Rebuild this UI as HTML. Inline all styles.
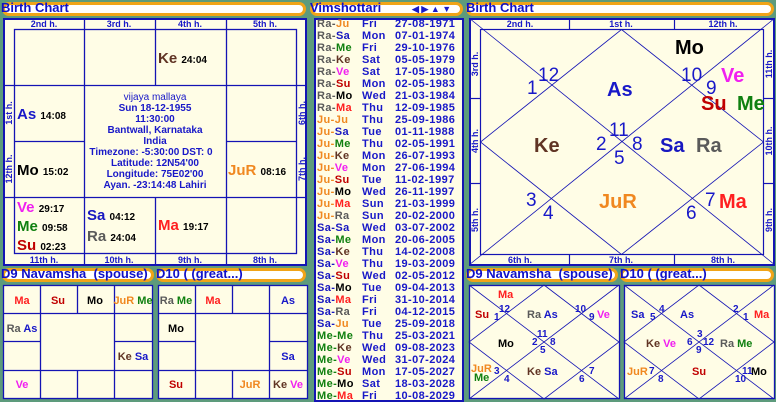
<!DOCTYPE html>
<html><head><meta charset="utf-8"><style>
*{margin:0;padding:0;box-sizing:border-box}
body{width:776px;height:400px;background:#5d9b7c;position:relative;overflow:hidden;font-family:"Liberation Sans",Arial,sans-serif;font-weight:bold}
.hd{position:absolute;height:14px;background:#fff;border:3px solid #f0a418;border-radius:8px}
.tt{position:absolute;color:#1010c8;font-size:13px;font-weight:bold;line-height:14px;white-space:nowrap}
.box{position:absolute;background:#fffde6;border:2px solid #1414b4}
.a{position:absolute;white-space:nowrap;line-height:1}
.b{color:#1818c8}.ra{color:#5a5a5a}.ju{color:#f08820}.sa{color:#1818c0}.me{color:#108010}.ke{color:#603424}.ve{color:#f020f0}.su{color:#c00000}.mo{color:#000}.ma{color:#ff2020}
.vr{position:absolute;left:317px;font-size:11px;line-height:12px;white-space:nowrap;letter-spacing:0.4px}
</style></head><body>

<!-- headers -->
<div class="hd" style="left:2px;top:2px;width:304px"></div><div class="tt" style="left:1px;top:1px">Birth Chart</div>
<div class="hd" style="left:310px;top:2px;width:153px"></div><div class="tt" style="left:310px;top:1px">Vimshottari</div>
<div class="a b" style="left:412px;top:5px;font-size:9px">◀ ▶ ▲ ▼</div>
<div class="hd" style="left:466px;top:2px;width:308px"></div><div class="tt" style="left:466px;top:1px">Birth Chart</div>
<div class="hd" style="left:2px;top:268px;width:152px"></div><div class="tt" style="left:1px;top:267px">D9 Navamsha &nbsp;(spouse)</div>
<div class="hd" style="left:156px;top:268px;width:150px"></div><div class="tt" style="left:156px;top:267px">D10 ( (great...)</div>
<div class="hd" style="left:466px;top:268px;width:152px"></div><div class="tt" style="left:466px;top:267px">D9 Navamsha &nbsp;(spouse)</div>
<div class="hd" style="left:620px;top:268px;width:154px"></div><div class="tt" style="left:620px;top:267px">D10 ( (great...)</div>

<!-- South birth chart -->
<div class="box" style="left:3px;top:18px;width:304px;height:248px"></div>
<svg style="position:absolute;left:0;top:0" width="310" height="270">
<g stroke="#1414b4" stroke-width="1.3" fill="none">
<rect x="14.5" y="29.5" width="282" height="224"/>
<line x1="84.5" y1="18" x2="84.5" y2="85"/><line x1="155.5" y1="18" x2="155.5" y2="85"/><line x1="226.5" y1="18" x2="226.5" y2="85"/>
<line x1="84.5" y1="197" x2="84.5" y2="265"/><line x1="155.5" y1="197" x2="155.5" y2="265"/><line x1="226.5" y1="197" x2="226.5" y2="265"/>
<line x1="3" y1="85.5" x2="306" y2="85.5"/><line x1="3" y1="197.5" x2="306" y2="197.5"/>
<line x1="14" y1="141.5" x2="84" y2="141.5"/><line x1="226" y1="141.5" x2="297" y2="141.5"/>
<line x1="84.5" y1="85" x2="84.5" y2="197"/><line x1="226.5" y1="85" x2="226.5" y2="197"/>
</g>
<g fill="#1818c8" font-size="9" font-weight="bold" font-family="Liberation Sans,Arial" text-anchor="middle">
<text x="44" y="27">2nd h.</text><text x="119" y="27">3rd h.</text><text x="190" y="27">4th h.</text><text x="265" y="27">5th h.</text>
<text x="44" y="263">11th h.</text><text x="119" y="263">10th h.</text><text x="190" y="263">9th h.</text><text x="265" y="263">8th h.</text>
<text transform="translate(12,113) rotate(-90)">1st h.</text><text transform="translate(12,169) rotate(-90)">12th h.</text>
<text transform="translate(305,113) rotate(-90)">6th h.</text><text transform="translate(305,169) rotate(-90)">7th h.</text>
</g></svg>
<div class="a" style="left:158px;top:51px;font-size:15px"><span class="ke">Ke</span> <span style="font-size:10px">24:04</span></div>
<div class="a" style="left:17px;top:107px;font-size:15px"><span class="b">As</span> <span style="font-size:10px">14:08</span></div>
<div class="a" style="left:17px;top:163px;font-size:15px"><span class="mo">Mo</span> <span style="font-size:10px">15:02</span></div>
<div class="a" style="left:228px;top:163px;font-size:15px"><span class="ju">JuR</span> <span style="font-size:10px">08:16</span></div>
<div class="a" style="left:17px;top:200px;font-size:15px"><span class="ve">Ve</span> <span style="font-size:10px">29:17</span></div>
<div class="a" style="left:17px;top:219px;font-size:15px"><span class="me">Me</span> <span style="font-size:10px">09:58</span></div>
<div class="a" style="left:17px;top:238px;font-size:15px"><span class="su">Su</span> <span style="font-size:10px">02:23</span></div>
<div class="a" style="left:87px;top:208px;font-size:15px"><span class="sa">Sa</span> <span style="font-size:10px">04:12</span></div>
<div class="a" style="left:87px;top:229px;font-size:15px"><span class="ra">Ra</span> <span style="font-size:10px">24:04</span></div>
<div class="a" style="left:158px;top:218px;font-size:15px"><span class="ma">Ma</span> <span style="font-size:10px">19:17</span></div>
<div class="a b" style="left:80px;width:150px;top:92px;text-align:center;font-size:10px;line-height:11px;white-space:normal">
<span style="font-weight:normal">vijaya mallaya</span><br>Sun 18-12-1955<br>11:30:00<br>Bantwall, Karnataka<br>India<br><span style="margin-left:-8px;white-space:nowrap">Timezone: -5:30:00 DST: 0</span><br>Latitude: 12N54'00<br>Longitude: 75E02'00<br>Ayan. -23:14:48 Lahiri</div>

<!-- Vimshottari -->
<div class="box" style="left:314px;top:18px;width:150px;height:384px"></div>
<div style="position:absolute;left:0;top:18px">
<div class="vr" style="top:0px"><span class="ra">Ra-</span><span class="ju">Ju</span><span class="b" style="position:absolute;left:45px">Fri</span><span class="b" style="position:absolute;left:78px">27-08-1971</span></div>
<div class="vr" style="top:12px"><span class="ra">Ra-</span><span class="sa">Sa</span><span class="b" style="position:absolute;left:45px">Mon</span><span class="b" style="position:absolute;left:78px">07-01-1974</span></div>
<div class="vr" style="top:24px"><span class="ra">Ra-</span><span class="me">Me</span><span class="b" style="position:absolute;left:45px">Fri</span><span class="b" style="position:absolute;left:78px">29-10-1976</span></div>
<div class="vr" style="top:36px"><span class="ra">Ra-</span><span class="ke">Ke</span><span class="b" style="position:absolute;left:45px">Sat</span><span class="b" style="position:absolute;left:78px">05-05-1979</span></div>
<div class="vr" style="top:48px"><span class="ra">Ra-</span><span class="ve">Ve</span><span class="b" style="position:absolute;left:45px">Sat</span><span class="b" style="position:absolute;left:78px">17-05-1980</span></div>
<div class="vr" style="top:60px"><span class="ra">Ra-</span><span class="su">Su</span><span class="b" style="position:absolute;left:45px">Mon</span><span class="b" style="position:absolute;left:78px">02-05-1983</span></div>
<div class="vr" style="top:72px"><span class="ra">Ra-</span><span class="mo">Mo</span><span class="b" style="position:absolute;left:45px">Wed</span><span class="b" style="position:absolute;left:78px">21-03-1984</span></div>
<div class="vr" style="top:84px"><span class="ra">Ra-</span><span class="ma">Ma</span><span class="b" style="position:absolute;left:45px">Thu</span><span class="b" style="position:absolute;left:78px">12-09-1985</span></div>
<div class="vr" style="top:96px"><span class="ju">Ju-</span><span class="ju">Ju</span><span class="b" style="position:absolute;left:45px">Thu</span><span class="b" style="position:absolute;left:78px">25-09-1986</span></div>
<div class="vr" style="top:108px"><span class="ju">Ju-</span><span class="sa">Sa</span><span class="b" style="position:absolute;left:45px">Tue</span><span class="b" style="position:absolute;left:78px">01-11-1988</span></div>
<div class="vr" style="top:120px"><span class="ju">Ju-</span><span class="me">Me</span><span class="b" style="position:absolute;left:45px">Thu</span><span class="b" style="position:absolute;left:78px">02-05-1991</span></div>
<div class="vr" style="top:132px"><span class="ju">Ju-</span><span class="ke">Ke</span><span class="b" style="position:absolute;left:45px">Mon</span><span class="b" style="position:absolute;left:78px">26-07-1993</span></div>
<div class="vr" style="top:144px"><span class="ju">Ju-</span><span class="ve">Ve</span><span class="b" style="position:absolute;left:45px">Mon</span><span class="b" style="position:absolute;left:78px">27-06-1994</span></div>
<div class="vr" style="top:156px"><span class="ju">Ju-</span><span class="su">Su</span><span class="b" style="position:absolute;left:45px">Tue</span><span class="b" style="position:absolute;left:78px">11-02-1997</span></div>
<div class="vr" style="top:168px"><span class="ju">Ju-</span><span class="mo">Mo</span><span class="b" style="position:absolute;left:45px">Wed</span><span class="b" style="position:absolute;left:78px">26-11-1997</span></div>
<div class="vr" style="top:180px"><span class="ju">Ju-</span><span class="ma">Ma</span><span class="b" style="position:absolute;left:45px">Sun</span><span class="b" style="position:absolute;left:78px">21-03-1999</span></div>
<div class="vr" style="top:192px"><span class="ju">Ju-</span><span class="ra">Ra</span><span class="b" style="position:absolute;left:45px">Sun</span><span class="b" style="position:absolute;left:78px">20-02-2000</span></div>
<div class="vr" style="top:204px"><span class="sa">Sa-</span><span class="sa">Sa</span><span class="b" style="position:absolute;left:45px">Wed</span><span class="b" style="position:absolute;left:78px">03-07-2002</span></div>
<div class="vr" style="top:216px"><span class="sa">Sa-</span><span class="me">Me</span><span class="b" style="position:absolute;left:45px">Mon</span><span class="b" style="position:absolute;left:78px">20-06-2005</span></div>
<div class="vr" style="top:228px"><span class="sa">Sa-</span><span class="ke">Ke</span><span class="b" style="position:absolute;left:45px">Thu</span><span class="b" style="position:absolute;left:78px">14-02-2008</span></div>
<div class="vr" style="top:240px"><span class="sa">Sa-</span><span class="ve">Ve</span><span class="b" style="position:absolute;left:45px">Thu</span><span class="b" style="position:absolute;left:78px">19-03-2009</span></div>
<div class="vr" style="top:252px"><span class="sa">Sa-</span><span class="su">Su</span><span class="b" style="position:absolute;left:45px">Wed</span><span class="b" style="position:absolute;left:78px">02-05-2012</span></div>
<div class="vr" style="top:264px"><span class="sa">Sa-</span><span class="mo">Mo</span><span class="b" style="position:absolute;left:45px">Tue</span><span class="b" style="position:absolute;left:78px">09-04-2013</span></div>
<div class="vr" style="top:276px"><span class="sa">Sa-</span><span class="ma">Ma</span><span class="b" style="position:absolute;left:45px">Fri</span><span class="b" style="position:absolute;left:78px">31-10-2014</span></div>
<div class="vr" style="top:288px"><span class="sa">Sa-</span><span class="ra">Ra</span><span class="b" style="position:absolute;left:45px">Fri</span><span class="b" style="position:absolute;left:78px">04-12-2015</span></div>
<div class="vr" style="top:300px"><span class="sa">Sa-</span><span class="ju">Ju</span><span class="b" style="position:absolute;left:45px">Tue</span><span class="b" style="position:absolute;left:78px">25-09-2018</span></div>
<div class="vr" style="top:312px"><span class="me">Me-</span><span class="me">Me</span><span class="b" style="position:absolute;left:45px">Thu</span><span class="b" style="position:absolute;left:78px">25-03-2021</span></div>
<div class="vr" style="top:324px"><span class="me">Me-</span><span class="ke">Ke</span><span class="b" style="position:absolute;left:45px">Wed</span><span class="b" style="position:absolute;left:78px">09-08-2023</span></div>
<div class="vr" style="top:336px"><span class="me">Me-</span><span class="ve">Ve</span><span class="b" style="position:absolute;left:45px">Wed</span><span class="b" style="position:absolute;left:78px">31-07-2024</span></div>
<div class="vr" style="top:348px"><span class="me">Me-</span><span class="su">Su</span><span class="b" style="position:absolute;left:45px">Mon</span><span class="b" style="position:absolute;left:78px">17-05-2027</span></div>
<div class="vr" style="top:360px"><span class="me">Me-</span><span class="mo">Mo</span><span class="b" style="position:absolute;left:45px">Sat</span><span class="b" style="position:absolute;left:78px">18-03-2028</span></div>
<div class="vr" style="top:372px"><span class="me">Me-</span><span class="ma">Ma</span><span class="b" style="position:absolute;left:45px">Fri</span><span class="b" style="position:absolute;left:78px">10-08-2029</span></div>
</div>

<!-- North birth chart -->
<div class="box" style="left:469px;top:18px;width:306px;height:248px"></div>
<svg style="position:absolute;left:0;top:0" width="776" height="400">
<g stroke="#1414b4" stroke-width="1.2" fill="none">
<rect x="480.5" y="29.5" width="283" height="225"/>
<line x1="569.5" y1="18" x2="569.5" y2="29"/><line x1="674.5" y1="18" x2="674.5" y2="29"/>
<line x1="569.5" y1="254" x2="569.5" y2="265"/><line x1="674.5" y1="254" x2="674.5" y2="265"/>
<line x1="469" y1="98.5" x2="480" y2="98.5"/><line x1="469" y1="183.5" x2="480" y2="183.5"/>
<line x1="763" y1="98.5" x2="775" y2="98.5"/><line x1="763" y1="183.5" x2="775" y2="183.5"/>
<line x1="469" y1="18" x2="775" y2="265" stroke-width="0.8"/><line x1="775" y1="18" x2="469" y2="265" stroke-width="0.8"/>
<polygon points="621.5,29.5 763.5,142 621.5,254.5 480.5,142" stroke-width="0.8"/>
</g>
<g fill="#1818c8" font-size="9" font-weight="bold" font-family="Liberation Sans,Arial" text-anchor="middle">
<text x="520" y="27">2nd h.</text><text x="621" y="27">1st h.</text><text x="723" y="27">12th h.</text>
<text x="520" y="263">6th h.</text><text x="621" y="263">7th h.</text><text x="723" y="263">8th h.</text>
<text transform="translate(478,64) rotate(-90)">3rd h.</text><text transform="translate(478,141) rotate(-90)">4th h.</text><text transform="translate(478,220) rotate(-90)">5th h.</text>
<text transform="translate(772,64) rotate(-90)">11th h.</text><text transform="translate(772,141) rotate(-90)">10th h.</text><text transform="translate(772,220) rotate(-90)">9th h.</text>
</g>
<g fill="#1818c8" font-size="19" font-family="Liberation Sans,Arial" font-weight="normal">
<text x="538" y="81">12</text><text x="527" y="94">1</text><text x="681" y="81">10</text><text x="706" y="94">9</text>
<text x="609" y="136">11</text><text x="596" y="150">2</text><text x="632" y="150">8</text><text x="614" y="164">5</text>
<text x="526" y="206">3</text><text x="543" y="219">4</text><text x="686" y="219">6</text><text x="705" y="206">7</text>
</g>
<g font-size="20" font-weight="bold" font-family="Liberation Sans,Arial">
<text x="675" y="54" fill="#000">Mo</text><text x="721" y="82" fill="#f020f0">Ve</text>
<text x="701" y="110" fill="#c00000">Su</text><text x="737" y="110" fill="#108010">Me</text>
<text x="607" y="96" fill="#1818c8">As</text><text x="534" y="152" fill="#603424">Ke</text>
<text x="660" y="152" fill="#1818c0">Sa</text><text x="696" y="152" fill="#5a5a5a">Ra</text>
<text x="599" y="208" fill="#f08820">JuR</text><text x="719" y="208" fill="#ff2020">Ma</text>
</g>

<!-- bottom south charts -->
<g stroke="#1414b4" stroke-width="1.3" fill="#fffde6">
<rect x="3.5" y="285.5" width="149" height="113"/><rect x="158.5" y="285.5" width="149" height="113"/>
<rect x="469.5" y="285.5" width="150" height="113"/><rect x="624.5" y="285.5" width="150" height="113"/>
</g>
<g stroke="#1414b4" stroke-width="1.3" fill="none">
<path d="M40.5 285V399M77.5 285V313M77.5 370V399M114.5 285V399M3 313.5H152M3 370.5H152M3 341.5H40M114 341.5H152"/>
<path d="M195.5 285V399M232.5 285V313M232.5 370V399M269.5 285V399M158 313.5H307M158 370.5H307M158 341.5H195M269 341.5H307"/>
</g>
<g stroke="#1414b4" stroke-width="0.8" fill="none">
<path d="M469 285L619 399M619 285L469 399M544 285L619 342L544 399L469 342Z"/>
<path d="M624 285L774 399M774 285L624 399M699 285L774 342L699 399L624 342Z"/>
</g>
<g font-size="11" font-weight="bold" font-family="Liberation Sans,Arial" text-anchor="middle">
<text x="22" y="304" fill="#ff2020">Ma</text><text x="58" y="304" fill="#c00000">Su</text><text x="95" y="304" fill="#000">Mo</text>
<text x="133" y="304"><tspan fill="#f08820">JuR</tspan> <tspan fill="#108010">Me</tspan></text>
<text x="22" y="332"><tspan fill="#5a5a5a">Ra</tspan> <tspan fill="#1818c8">As</tspan></text>
<text x="133" y="360"><tspan fill="#603424">Ke</tspan> <tspan fill="#1818c8">Sa</tspan></text>
<text x="22" y="388" fill="#f020f0">Ve</text>
<text x="176" y="304"><tspan fill="#5a5a5a">Ra</tspan> <tspan fill="#108010">Me</tspan></text>
<text x="213" y="304" fill="#ff2020">Ma</text><text x="288" y="304" fill="#1818c8">As</text>
<text x="176" y="332" fill="#000">Mo</text><text x="288" y="360" fill="#1818c8">Sa</text>
<text x="176" y="388" fill="#c00000">Su</text><text x="250" y="388" fill="#f08820">JuR</text>
<text x="288" y="388"><tspan fill="#603424">Ke</tspan> <tspan fill="#f020f0">Ve</tspan></text>
</g>
<!-- bottom north texts -->
<g font-size="11" font-weight="bold" font-family="Liberation Sans,Arial">
<text x="498" y="298" fill="#ff2020">Ma</text><text x="475" y="318" fill="#c00000">Su</text>
<text x="527" y="318"><tspan fill="#5a5a5a">Ra</tspan> <tspan fill="#1818c8">As</tspan></text>
<text x="597" y="318" fill="#f020f0">Ve</text><text x="498" y="347" fill="#000">Mo</text>
<text x="471" y="372" fill="#f08820">JuR</text><text x="474" y="381" fill="#108010">Me</text>
<text x="527" y="375"><tspan fill="#603424">Ke</tspan> <tspan fill="#1818c8">Sa</tspan></text>
<text x="631" y="318" fill="#1818c8">Sa</text><text x="680" y="318" fill="#1818c8">As</text><text x="754" y="318" fill="#ff2020">Ma</text>
<text x="646" y="347"><tspan fill="#603424">Ke</tspan> <tspan fill="#f020f0">Ve</tspan></text>
<text x="720" y="347"><tspan fill="#5a5a5a">Ra</tspan> <tspan fill="#108010">Me</tspan></text>
<text x="627" y="375" fill="#f08820">JuR</text><text x="692" y="375" fill="#c00000">Su</text><text x="751" y="375" fill="#000">Mo</text>
</g>
<g font-size="10" fill="#1818c8" font-family="Liberation Sans,Arial">
<text x="499" y="312">12</text><text x="494" y="320">1</text><text x="575" y="312">10</text><text x="589" y="320">9</text>
<text x="537" y="337">11</text><text x="532" y="345">2</text><text x="550" y="345">8</text><text x="540" y="353">5</text>
<text x="494" y="374">3</text><text x="504" y="382">4</text><text x="579" y="382">6</text><text x="589" y="374">7</text>
<text x="659" y="312">4</text><text x="650" y="320">5</text><text x="733" y="312">2</text><text x="743" y="320">1</text>
<text x="697" y="337">3</text><text x="687" y="345">6</text><text x="703" y="345">12</text><text x="696" y="353">9</text>
<text x="649" y="374">7</text><text x="658" y="382">8</text><text x="735" y="382">10</text><text x="742" y="374">11</text>
</g>
</svg>
</body></html>
